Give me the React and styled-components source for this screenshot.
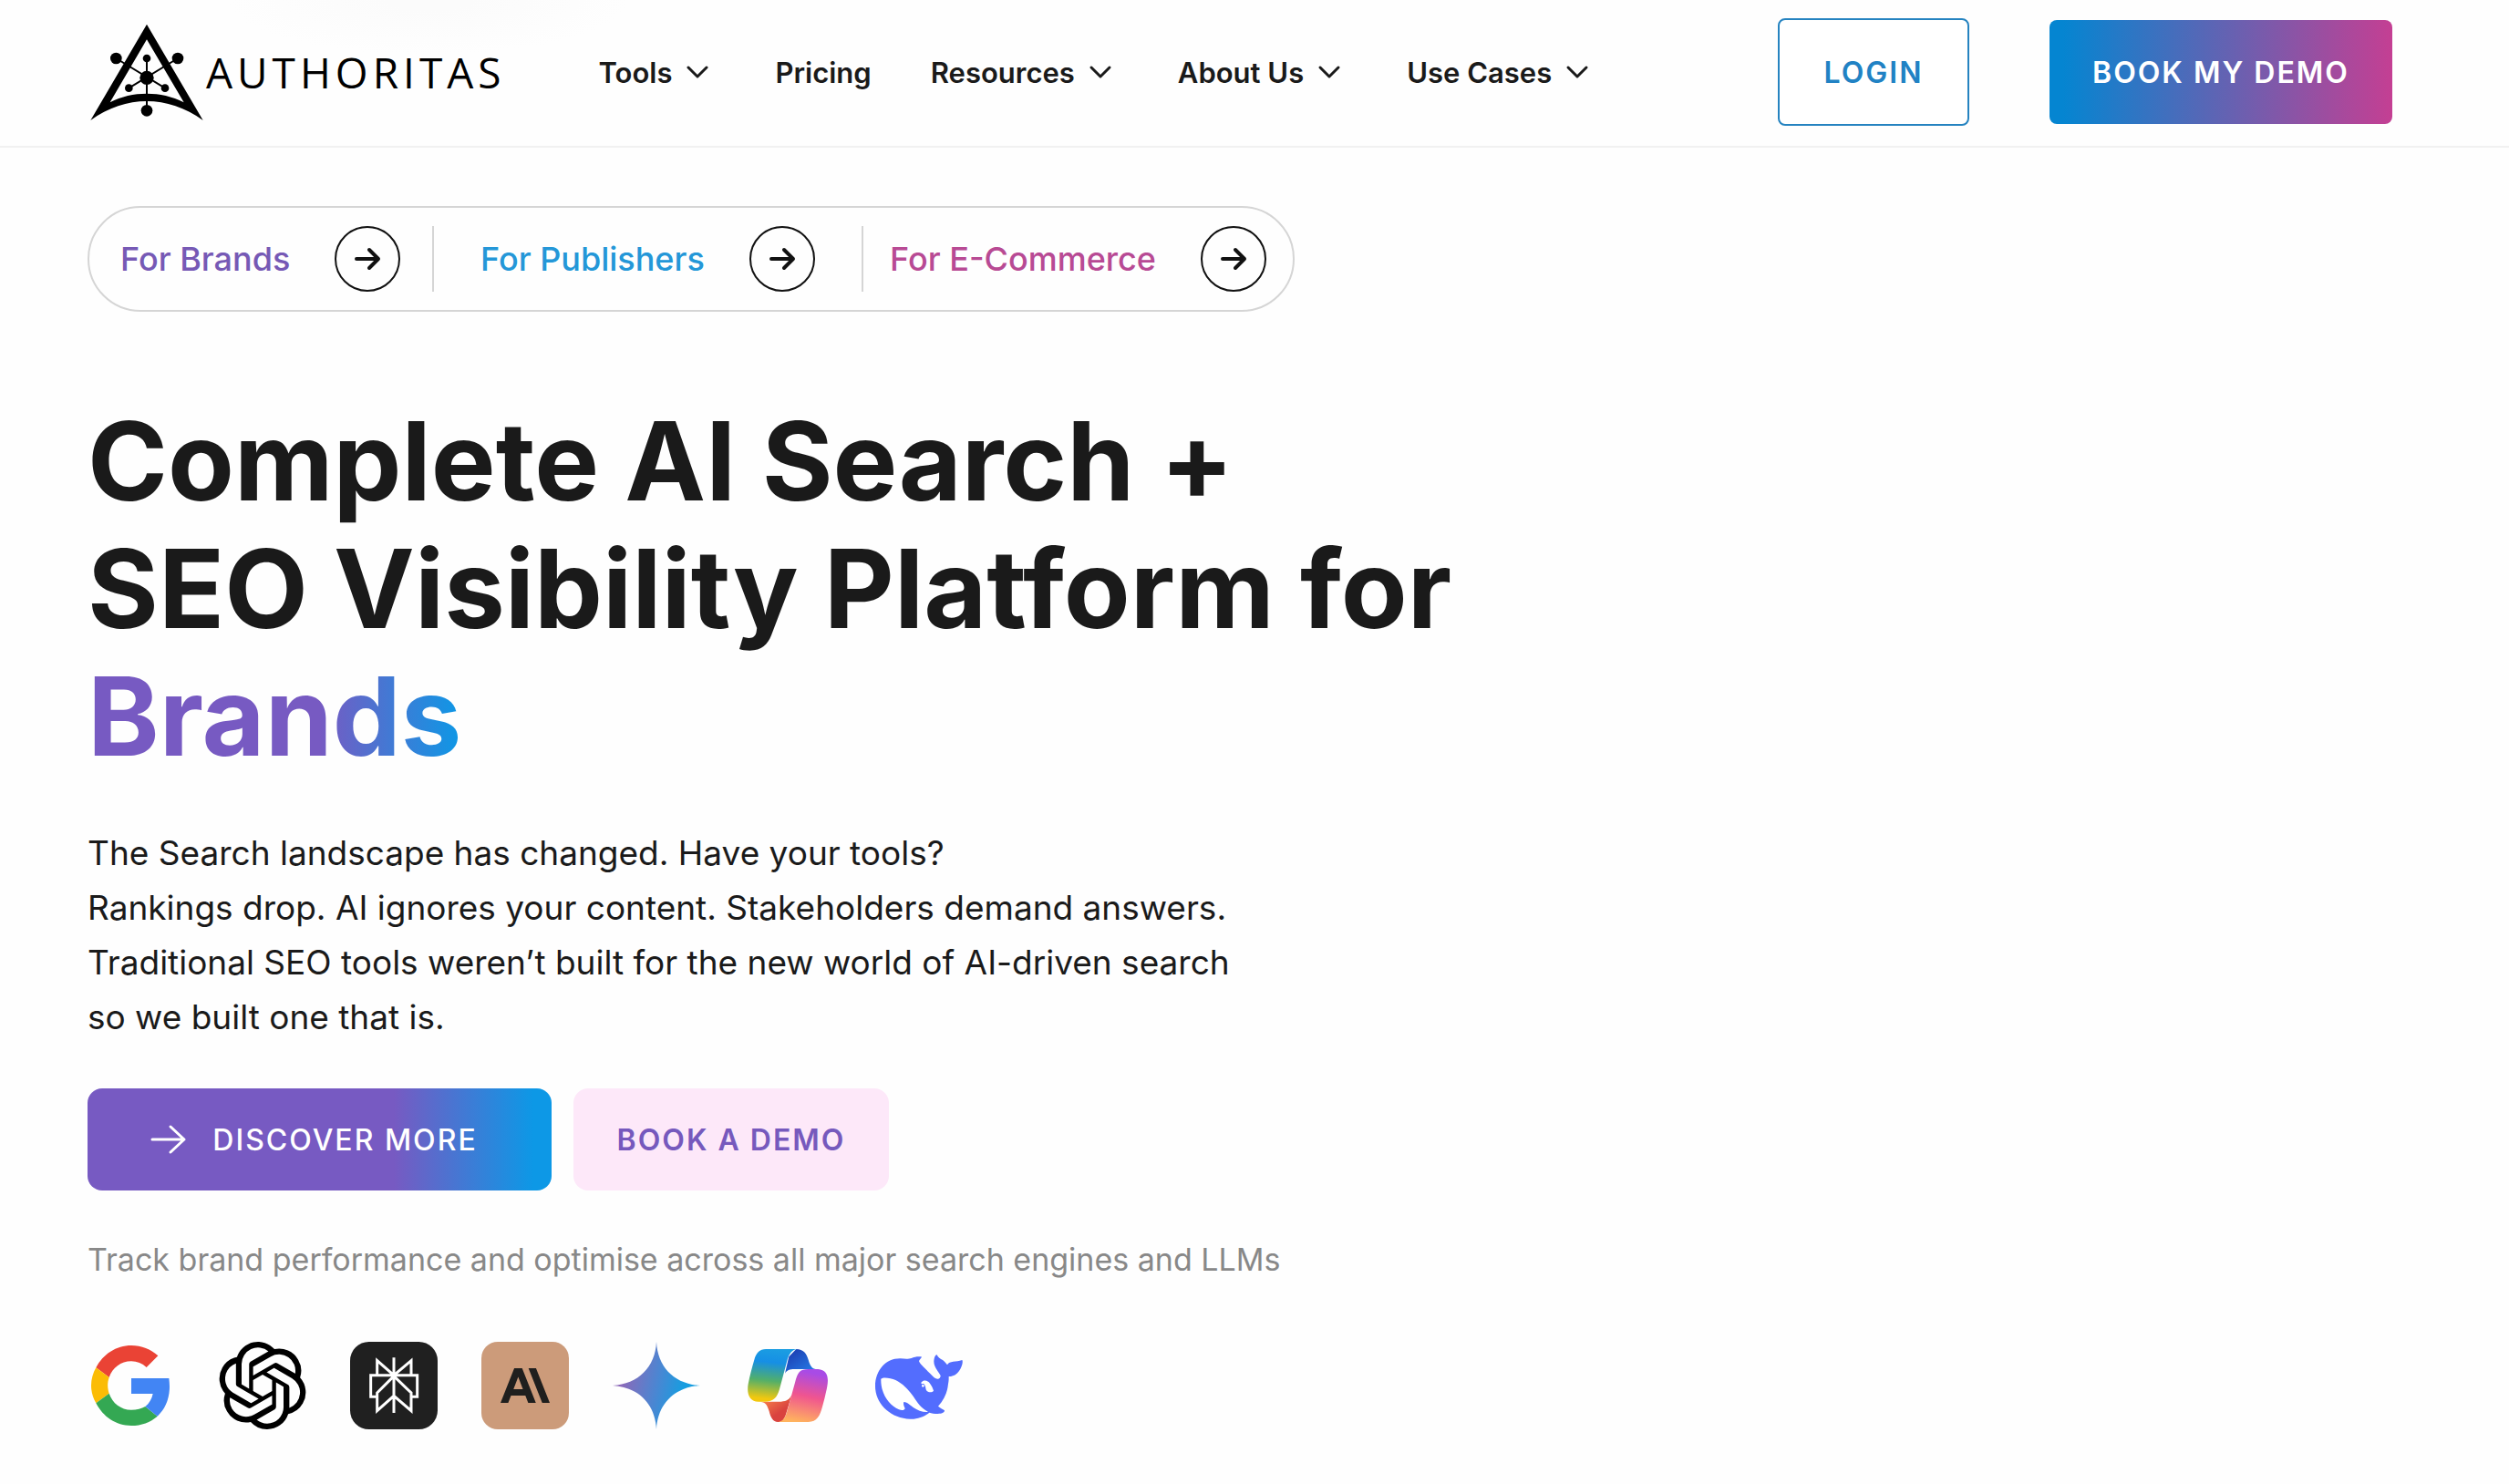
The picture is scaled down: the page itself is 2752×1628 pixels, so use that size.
import styled, { createGlobalStyle } from "styled-components";
import { SiAnthropic, SiOpenai } from "react-icons/si";

const GlobalStyle = createGlobalStyle`
  * {
    box-sizing: border-box;
  }
  body {
    margin: 0;
    background: #fefefe;
    color: #1a1a1a;
    font-family: Inter, "Liberation Sans", sans-serif;
  }
`;

const Header = styled.header`
  display: flex;
  align-items: center;
  height: 162px;
  padding: 0 128px 2px 96px;
  border-bottom: 2px solid #f1f1f1;
  background: radial-gradient(ellipse 220px 60px at 470px 0, #fbfbfb 20%, #fefefe);
`;
const Brand = styled.a`
  display: flex;
  align-items: center;
  color: #000;
  text-decoration: none;
`;
const BrandMark = styled.svg`
  width: 130px;
  height: 112px;
`;
const BrandName = styled.span`
  font-family: "Open Sans", "Noto Sans", sans-serif;
  font-size: 46px;
  font-weight: 400;
  letter-spacing: 5px;
`;
const Nav = styled.nav`
  display: flex;
  align-items: center;
  gap: 65px;
  margin-left: 102px;
`;
const NavLink = styled.a`
  display: flex;
  align-items: center;
  gap: 8px;
  color: #1a1a1a;
  font-size: 31px;
  font-weight: 600;
  text-decoration: none;
  white-space: nowrap;
`;
const ChevronIcon = styled.svg`
  width: 40px;
  height: 40px;
`;
const HeaderActions = styled.div`
  display: flex;
  align-items: center;
  gap: 88px;
  margin-left: auto;
`;
const HeaderButton = styled.button`
  border-radius: 8px;
  font-family: inherit;
  font-size: 32px;
  font-weight: 600;
  letter-spacing: 2px;
  white-space: nowrap;
`;
const LoginButton = styled(HeaderButton)`
  width: 210px;
  height: 118px;
  border: 2px solid #2583c0;
  background: #fff;
  color: #2182c4;
`;
const DemoButton = styled(HeaderButton)`
  width: 376px;
  height: 114px;
  border: 0;
  background: linear-gradient(90deg, #0585d1 4%, #c43f93);
  color: #fff;
`;

const Main = styled.main`
  padding: 64px 96px 60px;
`;
const Audiences = styled.div`
  display: flex;
  align-items: center;
  width: fit-content;
  height: 116px;
  padding-right: 29px;
  border: 2px solid #d5d5d5;
  border-radius: 58px;
`;
const Audience = styled.a`
  display: flex;
  align-items: center;
  justify-content: space-between;
  width: ${({ $width }) => $width}px;
  height: 72px;
  padding-left: ${({ $start }) => $start}px;
  padding-right: ${({ $end }) => $end}px;
  border-right: ${({ $last }) => ($last ? "0" : "2px solid #d5d5d5")};
  color: ${({ $color }) => $color};
  font-size: 36px;
  font-weight: 500;
  text-decoration: none;
  white-space: nowrap;
`;
const CircleArrow = styled.svg`
  width: 72px;
  height: 72px;
  flex: none;
`;
const Title = styled.h1`
  margin: 94px 0 0;
  font-size: 119px;
  font-weight: 700;
  line-height: 140px;
`;
const Highlight = styled.span`
  background: linear-gradient(90deg, #775ac2 62%, #0d98e6);
  background-clip: text;
  color: transparent;
`;
const Description = styled.p`
  margin: 50px 0 0;
  font-size: 37px;
  line-height: 60px;
`;
const Actions = styled.div`
  display: flex;
  gap: 24px;
  margin-top: 48px;
`;
const Button = styled.button`
  display: flex;
  align-items: center;
  justify-content: center;
  gap: 28px;
  width: ${({ $width }) => $width}px;
  height: 112px;
  padding: ${({ $primary }) => ($primary ? "0 76px 0 64px" : "0")};
  border: 0;
  border-radius: 16px;
  background: ${({ $primary }) =>
    $primary ? "linear-gradient(90deg, #775ac2 66%, #0d98e6 96%)" : "#fde8f9"};
  color: ${({ $primary }) => ($primary ? "#fff" : "#7659bd")};
  font-family: inherit;
  font-size: 32px;
  font-weight: ${({ $primary }) => ($primary ? 500 : 600)};
  letter-spacing: 2px;
  white-space: nowrap;
`;
const ArrowIcon = styled.svg`
  width: 40px;
  height: 40px;
  flex: none;
`;
const Caption = styled.p`
  margin: 50px 0 0;
  color: #888;
  font-size: 34px;
  line-height: 52px;
`;
const Engines = styled.div`
  display: flex;
  gap: 48px;
  margin-top: 64px;
`;
const Logo = styled.svg`
  width: 96px;
  height: 96px;
`;
const AnthropicTile = styled.div`
  display: flex;
  align-items: center;
  justify-content: center;
  width: 96px;
  height: 96px;
  border-radius: 18px;
  background: #cc9b7a;
  color: #1f1f1e;
`;

const navItems = [
  { label: "Tools", menu: true },
  { label: "Pricing" },
  { label: "Resources", menu: true },
  { label: "About Us", menu: true },
  { label: "Use Cases", menu: true },
];

const audiences = [
  { label: "For Brands", color: "#7659b5", width: 378, start: 34, end: 35 },
  { label: "For Publishers", color: "#2497d8", width: 471, start: 51, end: 51 },
  { label: "For E-Commerce", color: "#b84a94", width: 442, start: 29, end: 0 },
];

function AuthoritasMark() {
  return (
    <BrandMark viewBox="48 67 390 336" aria-hidden="true">
      <path
        fillRule="evenodd"
        d="M243 78 428 394C370 352 306 331 243 331S116 352 58 394ZM243 128 122 335C160 315 200 306 243 306S326 315 365 335Z"
      />
      <path
        d="M142 190 303 288M345 190 184 288M243 190V362"
        stroke="#000"
        strokeWidth="6"
      />
      <circle cx="142" cy="190" r="19" />
      <circle cx="345" cy="190" r="19" />
      <circle cx="243" cy="190" r="13" />
      <circle cx="243" cy="254" r="23" />
      <circle cx="184" cy="288" r="13" />
      <circle cx="303" cy="288" r="13" />
      <circle cx="243" cy="362" r="19" />
    </BrandMark>
  );
}

function Chevron() {
  return (
    <ChevronIcon viewBox="0 0 40 40" fill="none" aria-hidden="true">
      <path
        d="M10 15 20 25 30 15"
        stroke="currentColor"
        strokeWidth="3"
        strokeLinecap="round"
        strokeLinejoin="round"
      />
    </ChevronIcon>
  );
}

function CircleArrowIcon() {
  return (
    <CircleArrow viewBox="0 0 72 72" fill="none" aria-hidden="true">
      <circle cx="36" cy="36" r="35" stroke="#111" strokeWidth="2" />
      <path
        d="M24 36H48M38 26 48 36 38 46"
        stroke="#111"
        strokeWidth="4"
        strokeLinecap="round"
        strokeLinejoin="round"
      />
    </CircleArrow>
  );
}

function GoogleLogo() {
  return (
    <Logo viewBox="48 66 288 288" role="img" aria-label="Google">
      <path
        fill="#ea4335"
        d="M280 112C256 90 226 78 192 78 142 78 99 107 76 151L119 183C130 152 158 130 192 130 211 130 228 137 242 150Z"
      />
      <path
        fill="#fbbc05"
        d="M76 151C66 169 60 189 60 210S66 251 76 268L119 236C113 219 113 200 119 183Z"
      />
      <path
        fill="#34a853"
        d="M76 268C99 313 142 342 192 342 225 342 255 331 278 311L238 279C226 286 210 290 192 290 158 290 130 268 119 236Z"
      />
      <path
        fill="#4285f4"
        d="M192 186V237H263C260 254 251 269 238 279L278 311C303 288 318 254 318 213 318 204 317 195 316 186Z"
      />
    </Logo>
  );
}

function PerplexityLogo() {
  return (
    <Logo viewBox="912 66 288 288" role="img" aria-label="Perplexity">
      <rect x="912" y="66" width="288" height="288" rx="62" fill="#202020" />
      <path
        fill="none"
        stroke="#fff"
        strokeWidth="9"
        d="M1056 118V300M1001 247H980V176H1133V247H1113M1001 176V128L1056 176 1113 128V176M1056 179 1001 234V293L1056 244 1113 293V234Z"
      />
    </Logo>
  );
}

function GeminiLogo() {
  return (
    <Logo viewBox="516 66 288 288" role="img" aria-label="Gemini">
      <defs>
        <linearGradient id="gemini" x1="0" y1="0.4" x2="1" y2="0.6">
          <stop offset="0.1" stopColor="#8d69b8" />
          <stop offset="0.5" stopColor="#4b86d2" />
          <stop offset="0.8" stopColor="#179de0" />
        </linearGradient>
      </defs>
      <path
        fill="url(#gemini)"
        d="M660 66C664 150 720 205 804 210 720 215 664 270 660 354 656 270 600 215 516 210 600 205 656 150 660 66Z"
      />
    </Logo>
  );
}

function CopilotLogo() {
  return (
    <Logo viewBox="78 66 288 288" role="img" aria-label="Copilot">
      <defs>
        <linearGradient id="copilotLeft" x1="0.5" y1="0" x2="0.4" y2="1">
          <stop offset="0" stopColor="#1b9de2" />
          <stop offset="0.25" stopColor="#168fe5" />
          <stop offset="0.6" stopColor="#52af6a" />
          <stop offset="0.95" stopColor="#f2c80f" />
        </linearGradient>
        <linearGradient id="copilotFold" x1="0.8" y1="0.8" x2="0.2" y2="0.2">
          <stop offset="0" stopColor="#2474e0" />
          <stop offset="1" stopColor="#1d45b8" />
        </linearGradient>
        <linearGradient id="copilotRight" x1="0.6" y1="0" x2="0.4" y2="1">
          <stop offset="0.05" stopColor="#a84be6" />
          <stop offset="0.5" stopColor="#f0558f" />
          <stop offset="1" stopColor="#ffb35e" />
        </linearGradient>
        <linearGradient id="copilotTail" x1="0.2" y1="0" x2="0.7" y2="0.6">
          <stop offset="0" stopColor="#fb8a4c" />
          <stop offset="1" stopColor="#d9433f" />
        </linearGradient>
      </defs>
      <path
        fill="url(#copilotFold)"
        d="M250 90C274 90 284 105 290 125 296 146 302 156 320 156H245C228 156 219 160 213 170L226 115Z"
      />
      <path
        fill="url(#copilotTail)"
        d="M128 263H200C220 262 230 254 236 238L216 305C209 325 202 330 190 330 173 330 166 315 161 295 155 275 149 263 128 263Z"
      />
      <path
        fill="url(#copilotLeft)"
        d="M150 90H255C236 91 226 105 219 132L195 222C187 250 175 263 147 263H125C98 263 86 240 92 205 97 177 105 150 112 125 118 103 130 90 150 90Z"
      />
      <path
        fill="url(#copilotRight)"
        d="M290 156H322C350 158 358 180 352 212 348 235 342 257 336 280 328 310 318 330 290 330H190C208 328 214 315 220 295L246 200C255 165 262 156 290 156Z"
      />
    </Logo>
  );
}

function DeepSeekLogo() {
  return (
    <Logo viewBox="510 66 288 288" role="img" aria-label="DeepSeek">
      <path
        fill="#536dfe"
        d="M617 122C632 122 634 113 662 115 664 118 655 124 654 130 658 142 680 158 704 184 712 190 720 190 724 182L725 178C722 168 702 150 703 130 704 118 708 108 713 109 717 118 724 122 732 126 740 132 744 138 747 142 755 128 775 133 796 126 800 132 795 150 786 162 778 174 765 181 752 180 752 190 752 195 750 205 748 230 738 255 717 278 723 284 732 287 738 292 738 300 728 303 716 303 705 303 695 301 688 299 672 312 650 321 625 320 560 318 510 270 510 212 510 160 545 120 593 121 602 121 610 123 617 122Z"
      />
      <path
        fill="#fff"
        d="M529 188C535 183 548 184 560 187 590 193 615 218 635 245 650 268 662 285 685 297 668 299 650 292 635 282 622 272 612 263 604 264 601 272 606 280 608 285 606 292 598 293 588 289 555 275 527 235 529 188Z"
      />
      <path
        fill="#fff"
        d="M661 200C670 190 682 193 690 203 697 212 700 220 702 227 697 234 686 233 680 228 674 222 678 212 670 205 667 203 661 207 661 200Z"
      />
      <circle cx="667" cy="211" r="4" fill="#fff" />
    </Logo>
  );
}

function App() {
  return (
    <>
      <GlobalStyle />
      <Header>
        <Brand href="#">
          <AuthoritasMark />
          <BrandName>AUTHORITAS</BrandName>
        </Brand>
        <Nav>
          {navItems.map(({ label, menu }) => (
            <NavLink href="#" key={label}>
              {label}
              {menu && <Chevron />}
            </NavLink>
          ))}
        </Nav>
        <HeaderActions>
          <LoginButton type="button">LOGIN</LoginButton>
          <DemoButton type="button">BOOK MY DEMO</DemoButton>
        </HeaderActions>
      </Header>
      <Main>
        <Audiences>
          {audiences.map(({ label, color, width, start, end }, index) => (
            <Audience
              href="#"
              key={label}
              $color={color}
              $width={width}
              $start={start}
              $end={end}
              $last={index === audiences.length - 1}
            >
              {label}
              <CircleArrowIcon />
            </Audience>
          ))}
        </Audiences>
        <Title>
          Complete AI Search +
          <br />
          SEO Visibility Platform for
          <br />
          <Highlight>Brands</Highlight>
        </Title>
        <Description>
          The Search landscape has changed. Have your tools?
          <br />
          Rankings drop. AI ignores your content. Stakeholders demand answers.
          <br />
          Traditional SEO tools weren’t built for the new world of AI-driven
          search
          <br />
          so we built one that is.
        </Description>
        <Actions>
          <Button type="button" $width={509} $primary>
            <ArrowIcon viewBox="0 0 40 40" fill="none" aria-hidden="true">
              <path
                d="M2 20H37M22 6 37 20 22 34"
                stroke="currentColor"
                strokeWidth="3"
                strokeLinecap="round"
                strokeLinejoin="round"
              />
            </ArrowIcon>
            DISCOVER MORE
          </Button>
          <Button type="button" $width={346}>
            BOOK A DEMO
          </Button>
        </Actions>
        <Caption>
          Track brand performance and optimise across all major search engines
          and LLMs
        </Caption>
        <Engines>
          <GoogleLogo />
          <Logo as={SiOpenai} color="#000" title="OpenAI" />
          <PerplexityLogo />
          <AnthropicTile>
            <SiAnthropic size={54} title="Anthropic" />
          </AnthropicTile>
          <GeminiLogo />
          <CopilotLogo />
          <DeepSeekLogo />
        </Engines>
      </Main>
    </>
  );
}

export default App;
